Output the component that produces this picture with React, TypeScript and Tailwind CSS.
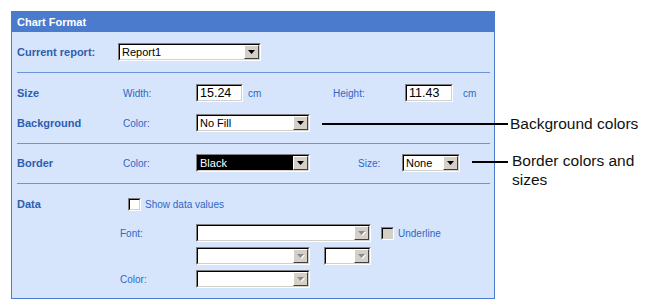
import React from 'react';

type BoxProps = {
  w: number;
  h?: number;
  className?: string;
  children?: React.ReactNode;
};

// classic sunken frame: gray/white outer, black/silver inner
const Sunken = ({ w, h = 18, className = '', children }: BoxProps) => (
  <div
    className="box-border border border-t-[#808080] border-l-[#808080] border-b-white border-r-white shrink-0"
    style={{ width: w, height: h }}
  >
    <div
      className={
        'box-border h-full w-full border border-t-[#000] border-l-[#000] border-b-[#d4d0c8] border-r-[#d4d0c8] ' +
        className
      }
    >
      {children}
    </div>
  </div>
);

const Arrow = ({ disabled }: { disabled?: boolean }) => (
  <svg width="8" height="5" viewBox="0 0 8 5">
    {disabled && <polygon points="1,1 8,1 4.5,5" fill="#ffffff" />}
    <polygon points="0,0 7,0 3.5,4" fill={disabled ? '#8a8a8a' : '#000000'} />
  </svg>
);

type SelectProps = {
  w: number;
  value?: string;
  dark?: boolean;
  disabled?: boolean;
};

const Select = ({ w, value = '', dark, disabled }: SelectProps) => (
  <Sunken w={w} className="flex">
    <div
      className={
        'flex-1 flex items-center pl-[2px] text-[11px] leading-none ' +
        (dark ? 'bg-black text-white' : 'bg-white text-black')
      }
    >
      {value}
    </div>
    <div className="box-border w-[15px] h-full flex items-center justify-center bg-[#d4d0c8] border border-t-white border-l-white border-b-[#404040] border-r-[#404040]">
      <Arrow disabled={disabled} />
    </div>
  </Sunken>
);

const Input = ({ w, value }: { w: number; value: string }) => (
  <Sunken w={w} className="bg-white flex items-center pl-[2px] text-[12.5px] text-black leading-none">
    {value}
  </Sunken>
);

const Check = ({ disabled }: { disabled?: boolean }) => (
  <Sunken w={13} h={13} className={disabled ? 'bg-[#d4d0c8]' : 'bg-white'} />
);

const Sep = ({ top }: { top: string }) => <div className={'h-px bg-[#6b93d6] ' + top} />;

const Heading = ({ children, w }: { children: React.ReactNode; w: number }) => (
  <div className="shrink-0 font-bold text-[11px] text-[#2d5eb0]" style={{ width: w }}>
    {children}
  </div>
);

const Label = ({ children, w }: { children?: React.ReactNode; w: number }) => (
  <div className="shrink-0 text-[10px] text-[#2f68c4]" style={{ width: w }}>
    {children}
  </div>
);

export default function App() {
  return (
    <div className="relative w-[651px] h-[305px] bg-white font-['Liberation_Sans',Arial,sans-serif] pt-[11px] pl-[11px]">
      <div className="box-border w-[484px] h-[288px] border border-[#4a7bcd] bg-[#d6e4fc]">
        {/* Header */}
        <div className="h-[20px] bg-[#4a7bcd] pl-[5px] flex items-center text-[11px] font-bold text-white">
          Chart Format
        </div>

        <div className="pl-[5px] pr-[4px]">
          {/* Current report */}
          <div className="mt-[11px] flex items-center h-[18px]">
            <Heading w={101}>Current report:</Heading>
            <Select w={143} value="Report1" />
          </div>

          <Sep top="mt-[11px]" />

          {/* Size */}
          <div className="mt-[11px] flex items-center h-[18px]">
            <Heading w={106}>Size</Heading>
            <Label w={73}>Width:</Label>
            <Input w={47} value="15.24" />
            <Label w={90}>
              <span className="pl-[5px]">cm</span>
            </Label>
            <Label w={72}>Height:</Label>
            <Input w={48} value="11.43" />
            <Label w={30}>
              <span className="pl-[10px]">cm</span>
            </Label>
          </div>

          {/* Background */}
          <div className="mt-[12px] flex items-center h-[18px]">
            <Heading w={106}>Background</Heading>
            <Label w={73}>Color:</Label>
            <Select w={114} value="No Fill" />
          </div>

          <Sep top="mt-[11px]" />

          {/* Border */}
          <div className="mt-[10px] flex items-center h-[18px]">
            <Heading w={106}>Border</Heading>
            <Label w={73}>Color:</Label>
            <Select w={114} value="Black" dark />
            <div className="w-[48px]" />
            <Label w={44}>Size:</Label>
            <Select w={58} value="None" />
          </div>

          <Sep top="mt-[11px]" />

          {/* Data */}
          <div className="mt-[14px] flex items-center h-[13px]">
            <Heading w={111}>Data</Heading>
            <Check />
            <Label w={120}>
              <span className="pl-[4px]">Show data values</span>
            </Label>
          </div>

          <div className="mt-[13px] flex items-center h-[18px]">
            <div className="w-[103px] shrink-0" />
            <Label w={76}>Font:</Label>
            <Select w={175} disabled />
            <div className="w-[10px]" />
            <Check disabled />
            <div className="text-[10px] text-[#2f68c4] pl-[4px]">Underline</div>
          </div>

          <div className="mt-[5px] flex items-center h-[18px]">
            <div className="w-[179px] shrink-0" />
            <Select w={114} disabled />
            <div className="w-[14px]" />
            <Select w={47} disabled />
          </div>

          <div className="mt-[5px] flex items-center h-[18px]">
            <div className="w-[103px] shrink-0" />
            <Label w={76}>Color:</Label>
            <Select w={114} disabled />
          </div>
        </div>
      </div>

      {/* Callouts */}
      <div className="absolute left-[322px] top-[113px] flex items-center h-[22px]">
        <div className="w-[186px] h-[2px] bg-black" />
        <div className="pl-[2px] text-[15.5px] text-[#111]">Background colors</div>
      </div>
      <div className="absolute left-[472px] top-[151px] flex items-start">
        <div className="w-[36px] h-[2px] bg-black mt-[10px]" />
        <div className="pl-[4px] text-[15.5px] leading-[19px] text-[#111]">
          Border colors and
          <br />
          sizes
        </div>
      </div>
    </div>
  );
}
